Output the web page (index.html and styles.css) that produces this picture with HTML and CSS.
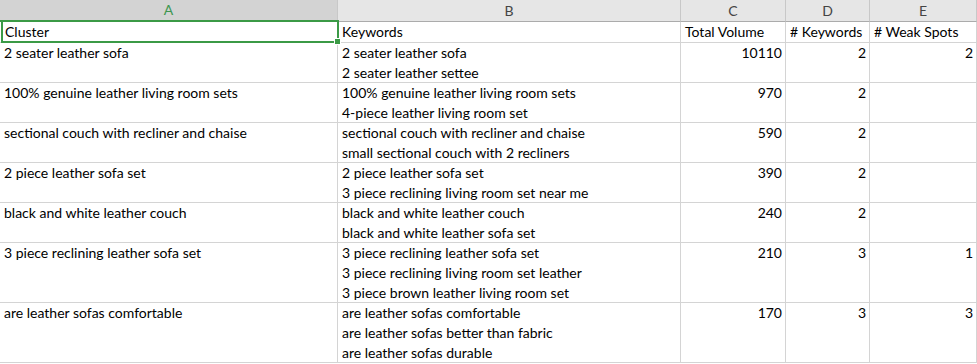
FILE: index.html
```html
<!DOCTYPE html>
<html>
<head>
<meta charset="utf-8">
<link rel="stylesheet" href="styles.css">
</head>
<body>
<div class="sheet">
<div class="row head">
<div class="hdr hdr-active">A</div>
<div class="hdr">B</div>
<div class="hdr">C</div>
<div class="hdr">D</div>
<div class="hdr">E</div>
</div>
<div class="row">
<div class="cell sel-cell"><div class="ln">Cluster</div><div class="selection"><span class="handle"></span></div></div>
<div class="cell"><div class="ln">Keywords</div></div>
<div class="cell"><div class="ln">Total Volume</div></div>
<div class="cell"><div class="ln"># Keywords</div></div>
<div class="cell"><div class="ln"># Weak Spots</div></div>
</div>
<div class="row">
<div class="cell"><div class="ln">2 seater leather sofa</div></div>
<div class="cell"><div class="ln">2 seater leather sofa</div><div class="ln">2 seater leather settee</div></div>
<div class="cell num"><div class="ln">10110</div></div>
<div class="cell num"><div class="ln">2</div></div>
<div class="cell num"><div class="ln">2</div></div>
</div>
<div class="row">
<div class="cell"><div class="ln">100% genuine leather living room sets</div></div>
<div class="cell"><div class="ln">100% genuine leather living room sets</div><div class="ln">4-piece leather living room set</div></div>
<div class="cell num"><div class="ln">970</div></div>
<div class="cell num"><div class="ln">2</div></div>
<div class="cell num"></div>
</div>
<div class="row">
<div class="cell"><div class="ln">sectional couch with recliner and chaise</div></div>
<div class="cell"><div class="ln">sectional couch with recliner and chaise</div><div class="ln">small sectional couch with 2 recliners</div></div>
<div class="cell num"><div class="ln">590</div></div>
<div class="cell num"><div class="ln">2</div></div>
<div class="cell num"></div>
</div>
<div class="row">
<div class="cell"><div class="ln">2 piece leather sofa set</div></div>
<div class="cell"><div class="ln">2 piece leather sofa set</div><div class="ln">3 piece reclining living room set near me</div></div>
<div class="cell num"><div class="ln">390</div></div>
<div class="cell num"><div class="ln">2</div></div>
<div class="cell num"></div>
</div>
<div class="row">
<div class="cell"><div class="ln">black and white leather couch</div></div>
<div class="cell"><div class="ln">black and white leather couch</div><div class="ln">black and white leather sofa set</div></div>
<div class="cell num"><div class="ln">240</div></div>
<div class="cell num"><div class="ln">2</div></div>
<div class="cell num"></div>
</div>
<div class="row">
<div class="cell"><div class="ln">3 piece reclining leather sofa set</div></div>
<div class="cell"><div class="ln">3 piece reclining leather sofa set</div><div class="ln">3 piece reclining living room set leather</div><div class="ln">3 piece brown leather living room set</div></div>
<div class="cell num"><div class="ln">210</div></div>
<div class="cell num"><div class="ln">3</div></div>
<div class="cell num"><div class="ln">1</div></div>
</div>
<div class="row">
<div class="cell"><div class="ln">are leather sofas comfortable</div></div>
<div class="cell"><div class="ln">are leather sofas comfortable</div><div class="ln">are leather sofas better than fabric</div><div class="ln">are leather sofas durable</div></div>
<div class="cell num"><div class="ln">170</div></div>
<div class="cell num"><div class="ln">3</div></div>
<div class="cell num"><div class="ln">3</div></div>
</div>
</div>
</body>
</html>
```
FILE: styles.css
```css
html, body {
  margin: 0;
  padding: 0;
  background: #ffffff;
}
.sheet {
  width: 977px;
  height: 364px;
  overflow: hidden;
  background: #ffffff;
  font-family: Lato, "Open Sans", sans-serif;
  font-size: 14px;
  color: #000000;
}
.row {
  display: grid;
  grid-template-columns: 338px 343px 105px 84px 107px;
}
.hdr {
  box-sizing: border-box;
  height: 22px;
  background: #e6e6e6;
  color: #444444;
  font-size: 14px;
  text-align: center;
  line-height: 21px;
  border-right: 1px solid #c8c8c8;
  border-bottom: 1px solid #ababab;
}
.hdr-active {
  background: #d3d3d3;
  color: #3e9650;
  border-bottom: 2px solid #3b9a46;
  line-height: 20px;
}
.cell {
  box-sizing: border-box;
  padding: 0 3px 0 4px;
  border-right: 1px solid #d4d4d4;
  border-bottom: 1px solid #d4d4d4;
  white-space: nowrap;
  overflow: hidden;
}
.ln {
  height: 20px;
  line-height: 20px;
}
.ln:last-child {
  height: 19px;
  line-height: 19px;
}
.num {
  text-align: right;
}
.sel-cell {
  position: relative;
  overflow: visible;
  padding-left: 5px;
}
.selection {
  position: absolute;
  left: 1px;
  top: -2px;
  right: -2px;
  bottom: -1px;
  border: 2px solid #3b9a46;
  pointer-events: none;
}
.handle {
  position: absolute;
  right: -4px;
  bottom: -4px;
  width: 5px;
  height: 5px;
  background: #3b9a46;
  border: 1px solid #ffffff;
}
```
